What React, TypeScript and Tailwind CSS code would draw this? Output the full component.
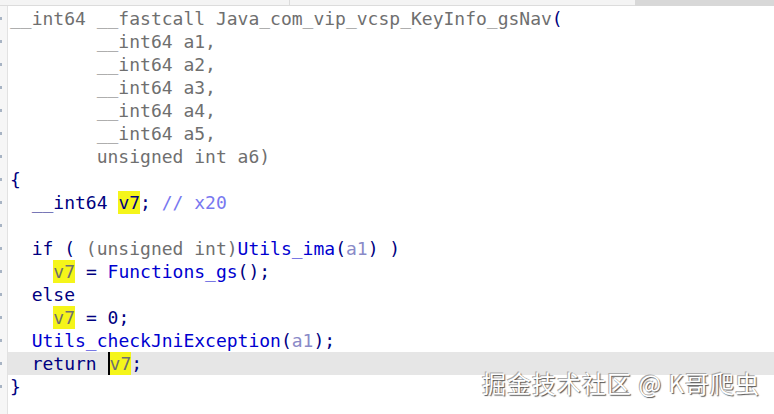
import React from "react";

type Seg = { t: string; c?: string; hl?: boolean };

const G = "text-[#6f6f6f]"; // gray default
const N = "text-[#000080]"; // navy
const B = "text-[#0000d0]"; // function blue
const P = "text-[#8a8ac8]"; // arg purple
const C = "text-[#7878f0]"; // comment

const lines: Seg[][] = [
  [{ t: "__int64 __fastcall Java_com_vip_vcsp_KeyInfo_gsNav", c: G }, { t: "(", c: N }],
  [{ t: "        __int64 a1,", c: G }],
  [{ t: "        __int64 a2,", c: G }],
  [{ t: "        __int64 a3,", c: G }],
  [{ t: "        __int64 a4,", c: G }],
  [{ t: "        __int64 a5,", c: G }],
  [{ t: "        unsigned int a6)", c: G }],
  [{ t: "{", c: N }],
  [{ t: "  __int64 ", c: N }, { t: "v7", c: N, hl: true }, { t: "; ", c: N }, { t: "// x20", c: C }],
  [{ t: "" }],
  [{ t: "  if ( ", c: N }, { t: "(unsigned int)", c: G }, { t: "Utils_ima", c: B }, { t: "(", c: N }, { t: "a1", c: P }, { t: ") )", c: N }],
  [{ t: "    " }, { t: "v7", c: G, hl: true }, { t: " = ", c: N }, { t: "Functions_gs", c: B }, { t: "();", c: N }],
  [{ t: "  else", c: N }],
  [{ t: "    " }, { t: "v7", c: G, hl: true }, { t: " = 0;", c: N }],
  [{ t: "  " }, { t: "Utils_checkJniException", c: B }, { t: "(", c: N }, { t: "a1", c: P }, { t: ");", c: N }],
  [{ t: "  return ", c: N }, { t: "v7", c: G, hl: true }, { t: ";", c: N }],
  [{ t: "}", c: N }],
];

export default function App() {
  return (
    <div className="relative w-[774px] h-[414px] overflow-hidden bg-white">
      {/* top strip */}
      <div className="flex h-[6px]">
        <div className="w-[290px] bg-[#f4f4f4] border-b border-r border-[#dcdcdc]" />
        <div className="w-[345px] bg-[#f4f4f4] border-b border-[#dcdcdc]" />
        <div className="flex-1 bg-[#d8d8d8]" />
      </div>
      <div className="flex">
        {/* gutter */}
        <div className="w-[8px] shrink-0 bg-[#f6f6f6] border-r border-[#e2e2e2] h-[408px] flex flex-col pt-[1px]">
          {lines.map((_, i) => (
            <div key={i} className="h-[23px] flex items-center">
              <div className="w-[2px] h-[3px] bg-[#a8b4c4]" />
            </div>
          ))}
        </div>
        <div className="flex-1 flex flex-col pt-[1px] font-['DejaVu_Sans_Mono',monospace] text-[18px] leading-[23px]">
          {lines.map((segs, i) => (
            <div
              key={i}
              className={`h-[23px] whitespace-pre pl-[2px] flex items-center ${i === 15 ? "bg-[#e6e6e6]" : ""}`}
            >
              {segs.map((s, j) => (
                <span key={j} className={`${s.c ?? ""} ${s.hl ? "bg-[#f5f51a]" : ""} ${i === 15 && s.hl ? "border-l-2 border-black bg-[#d8d830]" : ""}`}>
                  {s.t}
                </span>
              ))}
            </div>
          ))}
        </div>
      </div>
      <div className="absolute left-[482px] top-[368px] text-[24px] leading-[30px] tracking-[1px] text-white font-['Noto_Sans_CJK_SC','Noto_Sans',sans-serif] whitespace-pre [text-shadow:1px_1px_1px_#555,-1px_-1px_0_#aaa]">
        掘金技术社区 @ K哥爬虫
      </div>
    </div>
  );
}
